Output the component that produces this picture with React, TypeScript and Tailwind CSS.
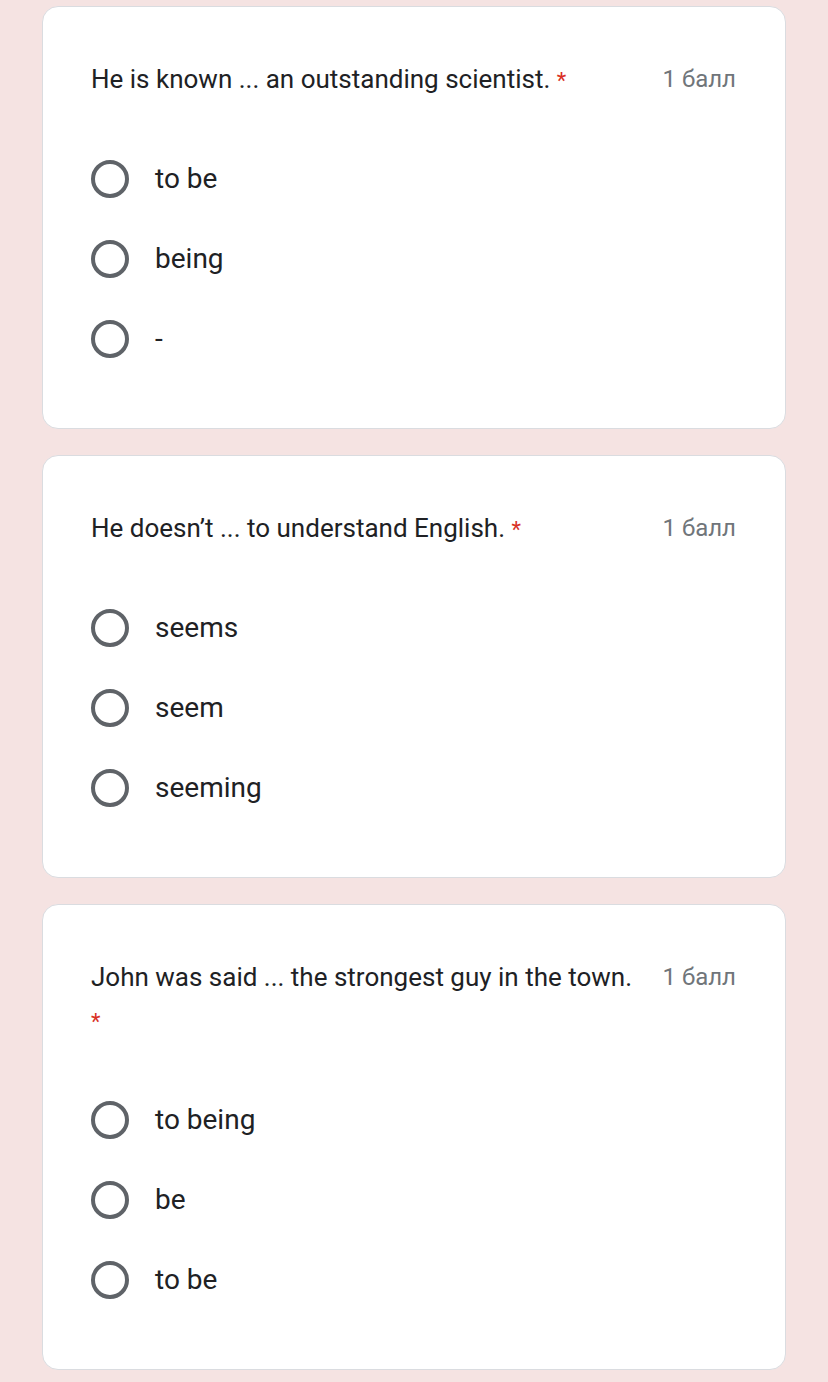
import React from "react";

type Q = { title: string; options: string[] };

const questions: Q[] = [
  { title: "He is known ... an outstanding scientist.", options: ["to be", "being", "-"] },
  { title: "He doesn’t ... to understand English.", options: ["seems", "seem", "seeming"] },
  { title: "John was said ... the strongest guy in the town.", options: ["to being", "be", "to be"] },
];

function Card({ q }: { q: Q }) {
  return (
    <div className="w-[744px] bg-white rounded-[16px] border border-[#dadce0] pl-[48px] pr-[49px] pt-[51px] pb-[49px]">
      <div className="flex items-start justify-between">
        <div
          className="w-[548px] text-[26px] leading-[43px] text-[#202124]"
          style={{ fontFamily: "Roboto, sans-serif" }}
        >
          {q.title} <span className="text-[#d93025] text-[22px]">*</span>
        </div>
        <div className="text-[24px] leading-[43px] text-[#70757a] whitespace-nowrap" style={{ fontFamily: "Roboto, sans-serif" }}>
          1 балл
        </div>
      </div>
      <div className="mt-[37px] flex flex-col">
        {q.options.map((o, i) => (
          <div key={i} className="h-[80px] flex items-center gap-[26px]">
            <div className="w-[38px] h-[38px] rounded-full border-[4px] border-[#5f6368] shrink-0" />
            <div className="text-[28px] text-[#202124]" style={{ fontFamily: "Roboto, sans-serif" }}>
              {o}
            </div>
          </div>
        ))}
      </div>
    </div>
  );
}

export default function App() {
  return (
    <div className="min-h-[1382px] bg-[#f5e3e2] pt-[6px] pl-[42px] flex flex-col gap-[26px]">
      {questions.map((q, i) => (
        <Card key={i} q={q} />
      ))}
    </div>
  );
}
